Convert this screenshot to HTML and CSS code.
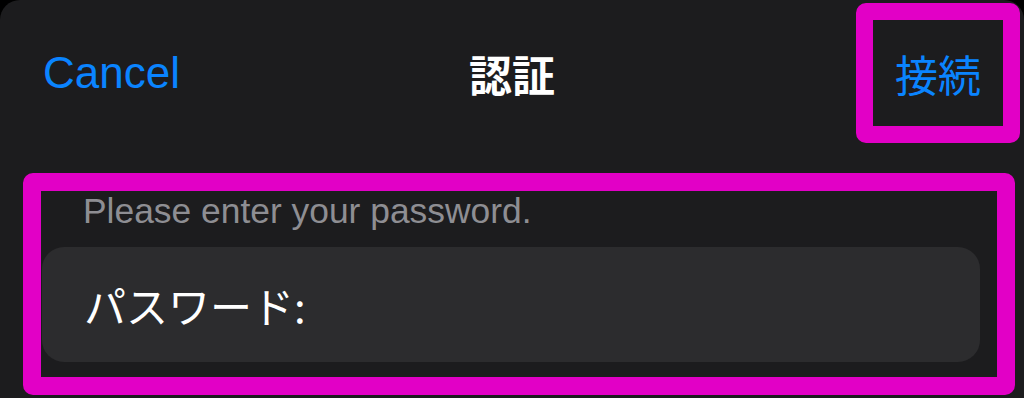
FILE: index.html
```html
<!DOCTYPE html>
<html lang="ja">
<head>
<meta charset="utf-8">
<title>認証</title>
<link rel="stylesheet" href="styles.css">
</head>
<body>
<div class="sheet">
  <header class="nav">
    <div class="nav-left"><span class="cancel">Cancel</span></div>
    <h1 class="title">認証</h1>
    <div class="nav-right"><span class="connect">接続</span></div>
  </header>
  <section class="group">
    <p class="hint">Please enter your password.</p>
    <div class="field"><span class="field-label">パスワード:</span></div>
  </section>
</div>
</body>
</html>
```

FILE: styles.css
```css
html, body {
  margin: 0;
  padding: 0;
  background: #000000;
}

.sheet {
  width: 1024px;
  height: 398px;
  background: #1c1c1e;
  border-top-left-radius: 20px;
  border-top-right-radius: 20px;
  display: flex;
  flex-direction: column;
  overflow: hidden;
  font-family: "Liberation Sans", "Noto Sans CJK JP", sans-serif;
}

.nav {
  display: grid;
  grid-template-columns: 1fr auto 1fr;
  align-items: center;
  box-sizing: border-box;
  height: 146px;
  padding: 3px 4px 3px 4px;
}

.nav-left {
  justify-self: start;
  padding-left: 39px;
}

.cancel {
  color: #0a84ff;
  font-size: 44px;
  line-height: 1;
}

.title {
  margin: 0;
  color: #ffffff;
  font-family: "Noto Sans CJK JP", sans-serif;
  font-weight: 700;
  font-size: 43px;
  line-height: 1;
}

.nav-right {
  justify-self: end;
  width: 164px;
  height: 140px;
  box-sizing: border-box;
  border: 17px solid #e200c6;
  border-radius: 10px;
  display: flex;
  align-items: center;
  justify-content: center;
}

.connect {
  color: #0a84ff;
  font-family: "Noto Sans CJK JP", sans-serif;
  font-size: 43px;
  line-height: 1;
}

.group {
  margin: 27px 0 0 23px;
  width: 992px;
  height: 222px;
  box-sizing: border-box;
  border: 18px solid #e200c6;
  border-radius: 10px;
  display: flex;
  flex-direction: column;
}

.hint {
  margin: 0;
  padding-left: 42px;
  color: #8e8e93;
  font-size: 35.4px;
  line-height: 40px;
}

.field {
  margin: 16px 17px 0 1px;
  height: 115px;
  background: #2c2c2e;
  border-radius: 22px;
  display: flex;
  align-items: center;
  padding-left: 42px;
}

.field-label {
  color: #ffffff;
  font-family: "Noto Sans CJK JP", sans-serif;
  font-size: 42px;
  line-height: 1;
}
```
